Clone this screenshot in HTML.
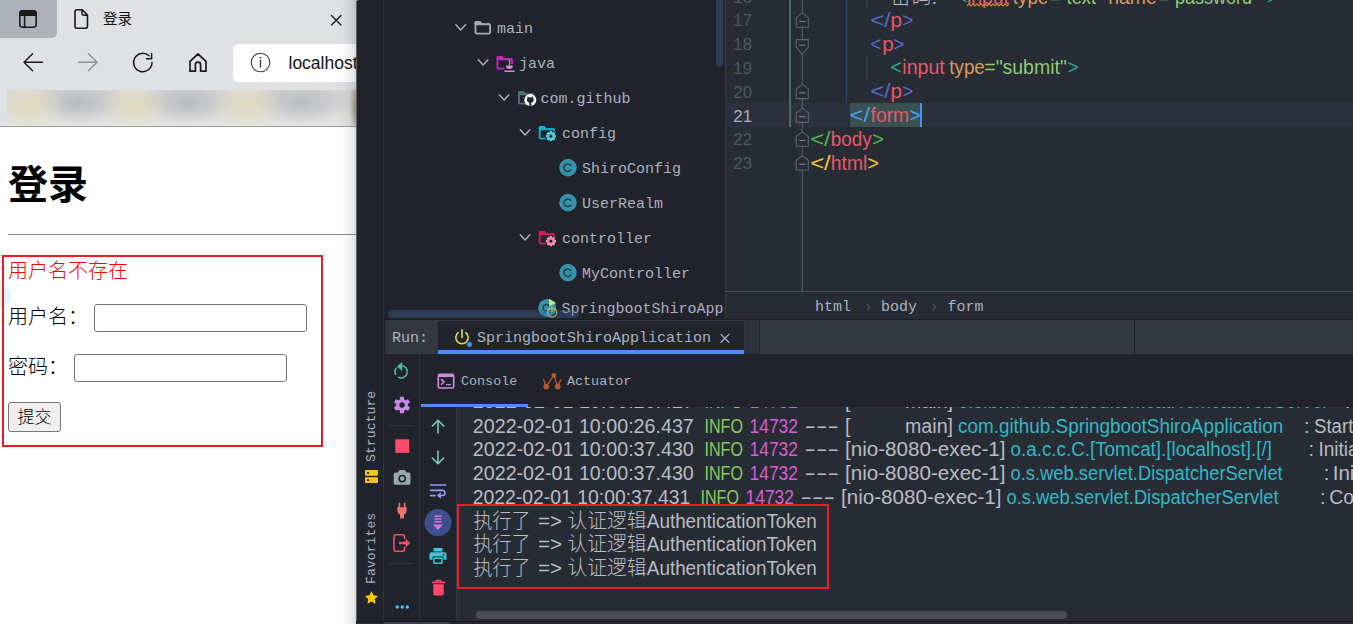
<!DOCTYPE html>
<html lang="zh-CN"><head><meta charset="utf-8"><title>登录</title>
<style>

html,body{margin:0;padding:0;}
body{width:1353px;height:624px;overflow:hidden;position:relative;background:#21242c;font-family:'Liberation Sans', 'Noto Sans CJK SC', sans-serif;}
.abs{position:absolute;}
#browser{position:absolute;left:0;top:0;width:366px;height:624px;background:#fff;overflow:hidden;}
#ide{position:absolute;left:356px;top:0;width:997px;height:624px;background:#21242c;overflow:hidden;border-top-left-radius:3px;}
svg{position:absolute;left:0;top:0;overflow:visible;}
.mono{font-family:'Liberation Mono', 'Noto Sans CJK SC', monospace;}
.tree{position:absolute;font-family:'Liberation Mono', 'Noto Sans CJK SC', monospace;font-size:15px;line-height:20px;color:#abb2bf;white-space:pre;}
.vtxt{position:absolute;font-family:'Liberation Mono', 'Noto Sans CJK SC', monospace;font-size:13.200px;line-height:16px;color:#abb2bf;white-space:pre;transform:rotate(-90deg);transform-origin:0 0;}
.pg{position:absolute;font-family:'Liberation Sans', 'Noto Sans CJK SC', sans-serif;font-weight:300;font-size:20px;line-height:24px;color:#000;white-space:pre;}
.inp{position:absolute;box-sizing:border-box;margin:0;padding:0;border:1px solid #767676;border-radius:3px;background:#fff;outline:none;-webkit-appearance:none;appearance:none;}

</style></head><body>
<div id="browser">
<div class="abs" style="left:0;top:0;width:366px;height:127px;background:#dfe1e5;"></div>
<div class="abs" style="left:0;top:0;width:57px;height:38px;background:#adb1b9;border-bottom-right-radius:5px;"></div>
<div class="abs" style="left:7px;top:90px;width:350px;height:37px;overflow:hidden;background:radial-gradient(ellipse 34px 26px at 22px 16px,rgba(229,221,188,.85),rgba(229,221,188,0)),radial-gradient(ellipse 34px 26px at 128px 16px,rgba(229,221,188,.85),rgba(229,221,188,0)),radial-gradient(ellipse 36px 26px at 240px 16px,rgba(229,221,188,.8),rgba(229,221,188,0)),radial-gradient(ellipse 50px 22px at 72px 12px,rgba(178,180,187,.85),rgba(178,180,187,0)),radial-gradient(ellipse 50px 22px at 180px 12px,rgba(178,180,187,.85),rgba(178,180,187,0)),radial-gradient(ellipse 52px 22px at 294px 12px,rgba(178,180,187,.8),rgba(178,180,187,0)),radial-gradient(ellipse 9px 28px at 351px 16px,rgba(150,132,92,.85),rgba(150,132,92,0)),linear-gradient(180deg,#d6d6d5 0,#dbdbda 55%,#e5e5e4 100%);"></div>
<div class="abs" style="left:0;top:126px;width:357px;height:1px;background:#9b9b9b;"></div>
<div class="abs" style="left:233px;top:44px;width:140px;height:38px;background:#fff;border-radius:6px;"></div>
<div class="abs" style="left:288.5px;top:50.700px;font-family:'Liberation Sans', 'Noto Sans CJK SC', sans-serif;font-size:17.5px;line-height:24px;color:#111;white-space:pre;">localhost:8080</div>
<div class="abs" style="left:103px;top:8.700px;font-family:'Liberation Sans', 'Noto Sans CJK SC', sans-serif;font-size:14.5px;line-height:20px;color:#111;white-space:pre;">登录</div>
<svg width="357" height="127" viewBox="0 0 357 127" fill="none" stroke="#1b1b1b" stroke-width="1.6" stroke-linecap="round" stroke-linejoin="round">
<rect x="19.8" y="10.8" width="16.4" height="16.4" rx="3"/>
<path d="M20 15.2H36V13.5a2.7 2.7 0 0 0-2.7-2.7H22.7A2.7 2.7 0 0 0 20 13.5Z" fill="#1b1b1b"/>
<path d="M24.6 15.5V27"/>
<path d="M77 9.8h5.2l5.3 5.3V26.3a2 2 0 0 1-2 2H77a2 2 0 0 1-2-2V11.8a2 2 0 0 1 2-2Z M82 10v3.6a1.6 1.6 0 0 0 1.6 1.6h3.7"/>
<path d="M331.5 15.5l9.5 9.5M341 15.5l-9.5 9.5" stroke-width="1.4"/>
<path d="M24 62.2H42.5M32.6 53.8L24 62.2l8.6 8.5" stroke-width="1.5"/>
<path d="M78.5 62.2H97M88.4 53.8L97 62.2l-8.6 8.5" stroke="#8d8f93" stroke-width="1.5"/>
<path d="M152 62.5a9.2 9.2 0 1 1-3-6.8 M151.6 53.6v5.2h-5.2" stroke-width="1.5"/>
<path d="M190 71.2V61.3l8-7.3 8 7.3v9.9h-5.4v-6.4a2.6 2.6 0 0 0-5.2 0v6.4Z" stroke-width="1.7"/>
<circle cx="260.5" cy="62.5" r="9.3" stroke="#444" stroke-width="1.1"/>
<path d="M260.5 60.3v6.7" stroke="#333" stroke-width="1.3"/><circle cx="260.5" cy="57.6" r="0.9" fill="#333" stroke="none"/>
</svg>
<h1 class="abs" style="margin:0;left:8px;top:158px;font-family:'Liberation Sans', 'Noto Sans CJK SC', sans-serif;font-weight:bold;font-size:40px;line-height:54px;color:#000;white-space:pre;">登录</h1>
<hr class="abs" style="margin:0;border:0;left:8px;top:234px;width:349px;height:1px;background:#8a8a8a;">
<div class="abs" style="left:-18px;top:281px;width:28px;height:30px;border-radius:50%;background:#dffaf0;"></div>
<div class="abs" style="left:2px;top:255px;width:321px;height:192px;box-sizing:border-box;border:2px solid #e81e25;"></div>
<form style="margin:0;">
<span class="pg" style="left:8px;top:259px;color:#ff0000;">用户名不存在</span>
<label class="pg" style="left:8px;top:305px;">用户名：</label>
<input class="inp" type="text" name="username" tabindex="-1" style="left:94px;top:304px;width:213px;height:28px;">
<label class="pg" style="left:8px;top:355px;">密码：</label>
<input class="inp" type="text" name="password" tabindex="-1" style="left:74px;top:354px;width:213px;height:28px;">
<button type="button" tabindex="-1" class="abs" style="margin:0;padding:1px 0 0 0;left:8px;top:402px;width:53px;height:30px;box-sizing:border-box;border:1px solid #767676;border-radius:3px;background:#efefef;font-family:'Liberation Sans', 'Noto Sans CJK SC', sans-serif;font-size:17px;font-weight:300;line-height:28px;text-align:center;color:#000;">提交</button>
</form>
<div class="abs" style="left:336px;top:0;width:30px;height:624px;background:linear-gradient(90deg,rgba(0,0,0,0),rgba(0,0,0,.025) 9px,rgba(0,0,0,.07) 15px,rgba(0,0,0,.15) 20px,rgba(0,0,0,.15) 30px);"></div>
</div>
<div id="ide">
<div class="abs" style="left:0;top:0;width:1px;height:624px;background:#5d5e64;"></div>
<div class="abs" style="left:27px;top:0;width:1px;height:624px;background:#2e323d;"></div>
<div class="tree" style="left:141px;top:19.5px;">main</div>
<div class="tree" style="left:163px;top:54.5px;">java</div>
<div class="tree" style="left:184.5px;top:89.5px;">com.github</div>
<div class="tree" style="left:206px;top:124.5px;">config</div>
<div class="tree" style="left:226px;top:159.5px;">ShiroConfig</div>
<div class="tree" style="left:226px;top:194.5px;">UserRealm</div>
<div class="tree" style="left:206px;top:229.5px;">controller</div>
<div class="tree" style="left:226px;top:264.5px;">MyController</div>
<div class="tree" style="left:205.5px;top:299.5px;">SpringbootShiroApp</div>
<svg width="997" height="624" viewBox="356 0 997 624" fill="none">
<path d="M455.90000000000003 24.8l4.800 5.200 4.800-5.200" stroke="#abb2bf" stroke-width="1.400" stroke-linecap="round" stroke-linejoin="round"/>
<path d="M475.5 24.2h13.400a1.2 1.2 0 0 1 1.2 1.2v7a1.2 1.2 0 0 1-1.2 1.2H476.7a1.2 1.2 0 0 1-1.2-1.2Z" stroke="#a3abb9" stroke-width="1.9"/>
<path d="M474.5 24.4V22.4a1.3 1.3 0 0 1 1.3-1.3h4.600l2 2.4h7.700v1Z" fill="#a3abb9"/>
<path d="M478.3 59.8l4.800 5.200 4.800-5.200" stroke="#abb2bf" stroke-width="1.400" stroke-linecap="round" stroke-linejoin="round"/>
<path d="M497.5 59.2h13.400a1.2 1.2 0 0 1 1.2 1.2v7a1.2 1.2 0 0 1-1.2 1.2H498.7a1.2 1.2 0 0 1-1.2-1.2Z" stroke="#c026c0" stroke-width="1.9"/>
<path d="M496.5 59.4V57.4a1.3 1.3 0 0 1 1.3-1.3h4.600l2 2.4h7.700v1Z" fill="#c026c0"/>
<rect x="504.3" y="64" width="10.400" height="9" fill="#21242c"/>
<path d="M509.9 60.2c-2.200 1.500 1.600 2.300-.6 4.300" stroke="#d58be0" stroke-width="1.100" stroke-linecap="round"/>
<path d="M505.9 65.6h7c0 2.400-1.300 3.500-3.500 3.500s-3.500-1.100-3.500-3.500Z" fill="#d58be0"/>
<path d="M504.9 71.2h9.200" stroke="#d58be0" stroke-width="1.400" stroke-linecap="round"/>
<path d="M499.3 94.8l4.800 5.200 4.800-5.200" stroke="#abb2bf" stroke-width="1.400" stroke-linecap="round" stroke-linejoin="round"/>
<path d="M519 94.2h13.400a1.2 1.2 0 0 1 1.2 1.2v7a1.2 1.2 0 0 1-1.2 1.2H520.2a1.2 1.2 0 0 1-1.2-1.2Z" stroke="#546e7a" stroke-width="1.9"/>
<path d="M518 94.4V92.4a1.3 1.3 0 0 1 1.3-1.3h4.600l2 2.4h7.700v1Z" fill="#546e7a"/>
<circle cx="530.3" cy="100" r="6" fill="#fff"/>
<path d="M527.6 96.2l1.5 1.2a4 4 0 0 1 2.4 0l1.5-1.2.3 2.1a3 3 0 0 1 .3 2.4c-.5 1.6-1.8 2-2.6 2.1.4.4.4 1 .4 1.6v1.4h-2.2v-1.4c0-.6 0-1.2.4-1.6-.8-.1-2.100-.5-2.6-2.1a3 3 0 0 1 .3-2.400Z" fill="#21242c"/>
<path d="M520.3 129.8l4.800 5.200 4.800-5.200" stroke="#abb2bf" stroke-width="1.400" stroke-linecap="round" stroke-linejoin="round"/>
<path d="M539.7 129.2h13.400a1.2 1.2 0 0 1 1.2 1.2v7a1.2 1.2 0 0 1-1.2 1.2H540.9000000000001a1.2 1.2 0 0 1-1.2-1.2Z" stroke="#10b4cc" stroke-width="1.9"/>
<path d="M538.7 129.4V127.4a1.3 1.3 0 0 1 1.3-1.3h4.600l2 2.4h7.700v1Z" fill="#10b4cc"/>
<circle cx="550.9000000000001" cy="136.2" r="6" fill="#21242c"/>
<g transform="translate(550.9000000000001 136.2) scale(.88)" fill="#4dd0e1"><rect x="-1.5" y="-5.8" width="3" height="11.6" rx=".6" transform="rotate(0)"/><rect x="-1.5" y="-5.8" width="3" height="11.6" rx=".6" transform="rotate(45)"/><rect x="-1.5" y="-5.8" width="3" height="11.6" rx=".6" transform="rotate(90)"/><rect x="-1.5" y="-5.8" width="3" height="11.6" rx=".6" transform="rotate(135)"/><circle r="4.2"/><circle r="1.8" fill="#21242c"/></g>
<circle cx="568.0" cy="167.6" r="8.8" fill="#3592a8"/>
<path d="M570.8 165.4a3.8 3.8 0 1 0 0 4.600" stroke="#22404f" stroke-width="1.5" stroke-linecap="round"/>
<circle cx="568.0" cy="202.6" r="8.8" fill="#3592a8"/>
<path d="M570.8 200.4a3.8 3.8 0 1 0 0 4.600" stroke="#22404f" stroke-width="1.5" stroke-linecap="round"/>
<path d="M520.3 234.8l4.800 5.200 4.800-5.200" stroke="#abb2bf" stroke-width="1.400" stroke-linecap="round" stroke-linejoin="round"/>
<path d="M539.7 234.2h13.400a1.2 1.2 0 0 1 1.2 1.2v7a1.2 1.2 0 0 1-1.2 1.2H540.9000000000001a1.2 1.2 0 0 1-1.2-1.2Z" stroke="#d81b60" stroke-width="1.9"/>
<path d="M538.7 234.4V232.4a1.3 1.3 0 0 1 1.3-1.3h4.600l2 2.4h7.700v1Z" fill="#d81b60"/>
<circle cx="550.9000000000001" cy="241.2" r="6" fill="#21242c"/>
<g transform="translate(550.9000000000001 241.2) scale(.88)" fill="#f48fb1"><rect x="-1.5" y="-5.8" width="3" height="11.6" rx=".6" transform="rotate(0)"/><rect x="-1.5" y="-5.8" width="3" height="11.6" rx=".6" transform="rotate(45)"/><rect x="-1.5" y="-5.8" width="3" height="11.6" rx=".6" transform="rotate(90)"/><rect x="-1.5" y="-5.8" width="3" height="11.6" rx=".6" transform="rotate(135)"/><circle r="4.2"/><circle r="1.8" fill="#21242c"/></g>
<circle cx="568.0" cy="272.6" r="8.8" fill="#3592a8"/>
<path d="M570.8 270.4a3.8 3.8 0 1 0 0 4.600" stroke="#22404f" stroke-width="1.5" stroke-linecap="round"/>
<circle cx="547.2" cy="307.9" r="9" fill="#3592a8"/>
<path d="M548.8000000000001 305.6a3.300 3.300 0 1 0 0 4.400" stroke="#22404f" stroke-width="1.500" stroke-linecap="round"/>
<path d="M549.0 298.8l7.200 4.300-7 3.500Z" fill="#bfe87a"/>
<path d="M549.5 308.7a4.600 4.600 0 1 0 5 0M552.0 306.8v5.400" stroke="#d6dc4a" stroke-width="1.300" stroke-linecap="round"/>
</svg>
<div class="abs" style="left:359.5px;top:-8px;width:7px;height:75px;border-radius:4px;background:rgba(67,96,156,.36);"></div>
<div class="abs" style="left:31.5px;top:310px;width:191px;height:7.800px;border-radius:4px;background:rgba(67,96,156,.36);"></div>
<div class="abs" style="left:369px;top:0;width:628px;height:319px;background:#282c35;overflow:hidden;">
</div>
<div class="abs" style="left:369px;top:0;width:1px;height:319px;background:#343945;"></div>
<div class="abs" style="left:369px;top:103.200px;width:628px;height:23.800px;background:#2c313d;"></div>
<div class="abs" style="left:494px;top:103.200px;width:70.300px;height:23.800px;background:#3b5151;"></div>
<div class="abs" style="left:564px;top:103.200px;width:2px;height:23.800px;background:#4d8dff;"></div>
<div class="abs" style="left:369px;top:291px;width:628px;height:1px;background:#4a4f5c;"></div>
<svg width="997" height="624" viewBox="356 0 997 624" fill="none">
<rect x="789.300" y="0" width="1.6" height="126.800" fill="#557c6d"/>
<rect x="801.800" y="0" width="1" height="291" fill="#5b606c"/>
<rect x="846.200" y="0" width="1" height="103" fill="#2c476a"/>
<rect x="866.400" y="0" width="1" height="8" fill="#3b4150"/>
<rect x="866.400" y="55.599999999999994" width="1" height="23.8" fill="#3b4150"/>
<path d="M796.300 27.2V17.5L802.300 12.899999999999999l6 4.600V27.2Z" fill="#282c35" stroke="#5d6370" stroke-width="1.1"/>
<path d="M799.200 21.5h6.200" stroke="#7a808c" stroke-width="1.1"/>
<path d="M796.300 39.6H808.300V47.0L802.300 54.6l-6-7.600Z" fill="#282c35" stroke="#5d6370" stroke-width="1.1"/>
<path d="M799.200 45.2h6.200" stroke="#7a808c" stroke-width="1.1"/>
<path d="M796.300 98.6V88.89999999999999L802.300 84.3l6 4.600V98.6Z" fill="#282c35" stroke="#5d6370" stroke-width="1.1"/>
<path d="M799.200 92.89999999999999h6.200" stroke="#7a808c" stroke-width="1.1"/>
<path d="M796.300 122.4V112.7L802.300 108.10000000000001l6 4.600V122.4Z" fill="#2c313d" stroke="#5d6370" stroke-width="1.1"/>
<path d="M799.200 116.7h6.200" stroke="#7a808c" stroke-width="1.1"/>
<path d="M796.300 146.2V136.49999999999997L802.300 131.89999999999998l6 4.600V146.2Z" fill="#282c35" stroke="#5d6370" stroke-width="1.1"/>
<path d="M799.200 140.49999999999997h6.200" stroke="#7a808c" stroke-width="1.1"/>
<path d="M796.300 170.0V160.29999999999998L802.300 155.7l6 4.600V170.0Z" fill="#282c35" stroke="#5d6370" stroke-width="1.1"/>
<path d="M799.200 164.29999999999998h6.200" stroke="#7a808c" stroke-width="1.1"/>
</svg>
<svg width="997" height="319" viewBox="356 0 997 319" style="font-family:'Liberation Sans', 'Noto Sans CJK SC', sans-serif;overflow:hidden;">
<text x="752" y="3.3" fill="#4f5668" font-size="16.8" text-anchor="end">16</text>
<text x="752" y="26.4" fill="#4f5668" font-size="16.8" text-anchor="end">17</text>
<text x="752" y="50.2" fill="#4f5668" font-size="16.8" text-anchor="end">18</text>
<text x="752" y="74.0" fill="#4f5668" font-size="16.8" text-anchor="end">19</text>
<text x="752" y="97.8" fill="#4f5668" font-size="16.8" text-anchor="end">20</text>
<text x="752" y="121.6" fill="#a9b0bd" font-size="16.8" text-anchor="end">21</text>
<text x="752" y="145.4" fill="#4f5668" font-size="16.8" text-anchor="end">22</text>
<text x="752" y="169.2" fill="#4f5668" font-size="16.8" text-anchor="end">23</text>
<text x="890.3" y="3.6" fill="#b8bcc6" font-size="20" textLength="47" lengthAdjust="spacingAndGlyphs" font-weight="300">密码:</text>
<text x="958.8" y="3.6" fill="#26a69a" font-size="20" textLength="8.5" lengthAdjust="spacingAndGlyphs">&lt;</text>
<text x="967" y="3.6" fill="#e5596a" font-size="20" textLength="42" lengthAdjust="spacingAndGlyphs">input</text>
<text x="1012.8" y="3.6" fill="#d9995f" font-size="20" textLength="35.5" lengthAdjust="spacingAndGlyphs">type</text>
<text x="1049.5" y="3.6" fill="#8fca72" font-size="20" textLength="53" lengthAdjust="spacingAndGlyphs">=&quot;text&quot;</text>
<text x="1108.3" y="3.6" fill="#d9995f" font-size="20" textLength="48.5" lengthAdjust="spacingAndGlyphs">name</text>
<text x="1158" y="3.6" fill="#8fca72" font-size="20" textLength="100.5" lengthAdjust="spacingAndGlyphs">=&quot;password&quot;</text>
<text x="1267.2" y="3.6" fill="#26a69a" font-size="20" textLength="9.5" lengthAdjust="spacingAndGlyphs">&gt;</text>
<path d="M967 5.9l2 -2l2 2l2 -2l2 2l2 -2l2 2l2 -2l2 2l2 -2l2 2l2 -2l2 2l2 -2l2 2l2 -2l2 2l2 -2l2 2l2 -2l2 2l2 -2" stroke="#d08a35" stroke-width="1.100" fill="none"/>
<text x="870.2" y="26.7" fill="#5867c9" font-size="20" textLength="20.5" lengthAdjust="spacingAndGlyphs">&lt;/</text>
<text x="890.5" y="26.7" fill="#e5596a" font-size="20" textLength="11.5" lengthAdjust="spacingAndGlyphs">p</text>
<text x="902.3" y="26.7" fill="#5867c9" font-size="20" textLength="11.2" lengthAdjust="spacingAndGlyphs">&gt;</text>
<text x="870.2" y="98.1" fill="#5867c9" font-size="20" textLength="20.5" lengthAdjust="spacingAndGlyphs">&lt;/</text>
<text x="890.5" y="98.1" fill="#e5596a" font-size="20" textLength="11.5" lengthAdjust="spacingAndGlyphs">p</text>
<text x="902.3" y="98.1" fill="#5867c9" font-size="20" textLength="11.2" lengthAdjust="spacingAndGlyphs">&gt;</text>
<text x="870.2" y="50.5" fill="#5867c9" font-size="20" textLength="11.2" lengthAdjust="spacingAndGlyphs">&lt;</text>
<text x="882.2" y="50.5" fill="#e5596a" font-size="20" textLength="11.5" lengthAdjust="spacingAndGlyphs">p</text>
<text x="893.3" y="50.5" fill="#5867c9" font-size="20" textLength="11.2" lengthAdjust="spacingAndGlyphs">&gt;</text>
<text x="890.5" y="74.3" fill="#26a69a" font-size="20" textLength="11.2" lengthAdjust="spacingAndGlyphs">&lt;</text>
<text x="902.3" y="74.3" fill="#e5596a" font-size="20" textLength="42.5" lengthAdjust="spacingAndGlyphs">input</text>
<text x="949.3" y="74.3" fill="#d9995f" font-size="20" textLength="35.5" lengthAdjust="spacingAndGlyphs">type</text>
<text x="984.3" y="74.3" fill="#8fca72" font-size="20" textLength="82.5" lengthAdjust="spacingAndGlyphs">=&quot;submit&quot;</text>
<text x="1067.5" y="74.3" fill="#26a69a" font-size="20" textLength="11.2" lengthAdjust="spacingAndGlyphs">&gt;</text>
<text x="849.6" y="121.9" fill="#3fa2f2" font-size="20" textLength="20.5" lengthAdjust="spacingAndGlyphs">&lt;/</text>
<text x="870.6" y="121.9" fill="#e5596a" font-size="20" textLength="38.5" lengthAdjust="spacingAndGlyphs">form</text>
<text x="909.2" y="121.9" fill="#3fa2f2" font-size="20" textLength="11.5" lengthAdjust="spacingAndGlyphs">&gt;</text>
<text x="810.2" y="145.7" fill="#4fb551" font-size="20" textLength="20.5" lengthAdjust="spacingAndGlyphs">&lt;/</text>
<text x="830.8" y="145.7" fill="#e5596a" font-size="20" textLength="41" lengthAdjust="spacingAndGlyphs">body</text>
<text x="872.2" y="145.7" fill="#4fb551" font-size="20" textLength="11.5" lengthAdjust="spacingAndGlyphs">&gt;</text>
<text x="810.2" y="169.5" fill="#f7c331" font-size="20" textLength="20.5" lengthAdjust="spacingAndGlyphs">&lt;/</text>
<text x="830.8" y="169.5" fill="#e5596a" font-size="20" textLength="36.5" lengthAdjust="spacingAndGlyphs">html</text>
<text x="867.5" y="169.5" fill="#f7c331" font-size="20" textLength="11.5" lengthAdjust="spacingAndGlyphs">&gt;</text>
</svg>
<div class="tree" style="left:459px;top:297.5px;color:#abb2bf;">html</div>
<div class="tree" style="left:525px;top:297.5px;color:#abb2bf;">body</div>
<div class="tree" style="left:591.5px;top:297.5px;color:#abb2bf;">form</div>
<div class="tree" style="left:508px;top:296.5px;color:#565c6b;font-size:14px;">›</div>
<div class="tree" style="left:574px;top:296.5px;color:#565c6b;font-size:14px;">›</div>
<div class="abs" style="left:29px;top:319.700px;width:968px;height:34.300px;background:#333843;"></div>
<div class="abs" style="left:28px;top:318.700px;width:969px;height:1px;background:#1b1d23;"></div>
<div class="abs" style="left:81.5px;top:321px;width:306.5px;height:33px;background:#21242c;"></div>
<div class="abs" style="left:81.5px;top:350.200px;width:306.5px;height:3.800px;background:#4d8dff;"></div>
<div class="abs" style="left:388.5px;top:320px;width:15px;height:34px;background:#2d323d;"></div>
<div class="abs" style="left:403px;top:320px;width:1px;height:34px;background:#23262e;"></div>
<div class="abs" style="left:778px;top:320px;width:1px;height:34px;background:#23262e;"></div>
<div class="tree" style="left:36px;top:328.5px;">Run:</div>
<div class="tree" style="left:121px;top:328.5px;">SpringbootShiroApplication</div>
<div class="abs" style="left:101px;top:407px;width:896px;height:214px;background:#282c35;"></div>
<div class="abs" style="left:63px;top:354px;width:1px;height:267px;background:#2e323d;"></div>
<div class="abs" style="left:100px;top:407px;width:1px;height:214px;background:#333845;"></div>
<div class="abs" style="left:64.5px;top:403.600px;width:107.5px;height:3.4px;background:#4d8dff;"></div>
<div class="tree" style="left:105px;top:371.800px;font-size:13.400px;">Console</div>
<div class="tree" style="left:211px;top:371.800px;font-size:13.400px;">Actuator</div>
<div class="vtxt" style="left:7.5px;top:462.300px;">Structure</div>
<div class="vtxt" style="left:7.5px;top:584.300px;">Favorites</div>
<div class="abs" style="left:0;top:621px;width:997px;height:1px;background:#17191e;"></div>
<div class="abs" style="left:0;top:622px;width:997px;height:2px;background:#262a33;"></div>
<div class="abs" style="left:28px;top:622px;width:66px;height:2px;background:#3a3f4b;"></div>
<div class="abs" style="left:120px;top:611px;width:591px;height:7.5px;border-radius:4px;background:#484c56;"></div>
<svg width="997" height="624" viewBox="356 0 997 624" style="font-family:'Liberation Sans', 'Noto Sans CJK SC', sans-serif;">
<defs><clipPath id="cc"><rect x="457" y="407" width="896" height="214"/></clipPath></defs>
<g clip-path="url(#cc)">
<text x="472.8" y="408.3" fill="#b9bcc4" font-size="20" textLength="221" lengthAdjust="spacingAndGlyphs">2022-02-01 10:00:26.427</text>
<text x="704.5" y="408.3" fill="#8bc85f" font-size="20" textLength="38.5" lengthAdjust="spacingAndGlyphs">INFO</text>
<text x="749.5" y="408.3" fill="#d65fd3" font-size="20" textLength="48.5" lengthAdjust="spacingAndGlyphs">14732</text>
<text x="804.5" y="408.3" fill="#b9bcc4" font-size="20" textLength="34.5" lengthAdjust="spacingAndGlyphs">---</text>
<text x="845" y="408.3" fill="#b9bcc4" font-size="20" textLength="5.5" lengthAdjust="spacingAndGlyphs">[</text>
<text x="905" y="408.3" fill="#b9bcc4" font-size="20" textLength="48" lengthAdjust="spacingAndGlyphs">main]</text>
<text x="958" y="408.3" fill="#2fb8c6" font-size="20" textLength="370.5" lengthAdjust="spacingAndGlyphs">o.s.b.w.embedded.tomcat.TomcatWebServer</text>
<text x="1344.8" y="408.3" fill="#b9bcc4" font-size="20">:</text>
<text x="1356" y="408.3" fill="#b9bcc4" font-size="20" textLength="130" lengthAdjust="spacingAndGlyphs">Tomcat started</text>
<text x="472.8" y="432.7" fill="#b9bcc4" font-size="20" textLength="221" lengthAdjust="spacingAndGlyphs">2022-02-01 10:00:26.437</text>
<text x="704.5" y="432.7" fill="#8bc85f" font-size="20" textLength="38.5" lengthAdjust="spacingAndGlyphs">INFO</text>
<text x="749.5" y="432.7" fill="#d65fd3" font-size="20" textLength="48.5" lengthAdjust="spacingAndGlyphs">14732</text>
<text x="804.5" y="432.7" fill="#b9bcc4" font-size="20" textLength="34.5" lengthAdjust="spacingAndGlyphs">---</text>
<text x="845" y="432.7" fill="#b9bcc4" font-size="20" textLength="5.5" lengthAdjust="spacingAndGlyphs">[</text>
<text x="905" y="432.7" fill="#b9bcc4" font-size="20" textLength="48" lengthAdjust="spacingAndGlyphs">main]</text>
<text x="958" y="432.7" fill="#2fb8c6" font-size="20" textLength="325.2" lengthAdjust="spacingAndGlyphs">com.github.SpringbootShiroApplication</text>
<text x="1304.1" y="432.7" fill="#b9bcc4" font-size="20">:</text>
<text x="1314" y="432.7" fill="#b9bcc4" font-size="20" textLength="290" lengthAdjust="spacingAndGlyphs">Started SpringbootShiroApplication</text>
<text x="472.8" y="456.4" fill="#b9bcc4" font-size="20" textLength="221" lengthAdjust="spacingAndGlyphs">2022-02-01 10:00:37.430</text>
<text x="704.5" y="456.4" fill="#8bc85f" font-size="20" textLength="38.5" lengthAdjust="spacingAndGlyphs">INFO</text>
<text x="749.5" y="456.4" fill="#d65fd3" font-size="20" textLength="48.5" lengthAdjust="spacingAndGlyphs">14732</text>
<text x="804.5" y="456.4" fill="#b9bcc4" font-size="20" textLength="34.5" lengthAdjust="spacingAndGlyphs">---</text>
<text x="845" y="456.4" fill="#b9bcc4" font-size="20" textLength="160.5" lengthAdjust="spacingAndGlyphs">[nio-8080-exec-1]</text>
<text x="1010.5" y="456.4" fill="#2fb8c6" font-size="20" textLength="261.4" lengthAdjust="spacingAndGlyphs">o.a.c.c.C.[Tomcat].[localhost].[/]</text>
<text x="1308.6" y="456.4" fill="#b9bcc4" font-size="20">:</text>
<text x="1318.4" y="456.4" fill="#b9bcc4" font-size="20" textLength="300" lengthAdjust="spacingAndGlyphs">Initializing Spring DispatcherServlet</text>
<text x="472.8" y="480.1" fill="#b9bcc4" font-size="20" textLength="221" lengthAdjust="spacingAndGlyphs">2022-02-01 10:00:37.430</text>
<text x="704.5" y="480.1" fill="#8bc85f" font-size="20" textLength="38.5" lengthAdjust="spacingAndGlyphs">INFO</text>
<text x="749.5" y="480.1" fill="#d65fd3" font-size="20" textLength="48.5" lengthAdjust="spacingAndGlyphs">14732</text>
<text x="804.5" y="480.1" fill="#b9bcc4" font-size="20" textLength="34.5" lengthAdjust="spacingAndGlyphs">---</text>
<text x="845" y="480.1" fill="#b9bcc4" font-size="20" textLength="160.5" lengthAdjust="spacingAndGlyphs">[nio-8080-exec-1]</text>
<text x="1010.5" y="480.1" fill="#2fb8c6" font-size="20" textLength="272.2" lengthAdjust="spacingAndGlyphs">o.s.web.servlet.DispatcherServlet</text>
<text x="1323.7" y="480.1" fill="#b9bcc4" font-size="20">:</text>
<text x="1332.7" y="480.1" fill="#b9bcc4" font-size="20" textLength="160" lengthAdjust="spacingAndGlyphs">Initializing Servlet</text>
<text x="472.8" y="503.8" fill="#b9bcc4" font-size="20" textLength="217.5" lengthAdjust="spacingAndGlyphs">2022-02-01 10:00:37.431</text>
<text x="700.5" y="503.8" fill="#8bc85f" font-size="20" textLength="38.5" lengthAdjust="spacingAndGlyphs">INFO</text>
<text x="745.5" y="503.8" fill="#d65fd3" font-size="20" textLength="48.5" lengthAdjust="spacingAndGlyphs">14732</text>
<text x="800.5" y="503.8" fill="#b9bcc4" font-size="20" textLength="34.5" lengthAdjust="spacingAndGlyphs">---</text>
<text x="841" y="503.8" fill="#b9bcc4" font-size="20" textLength="160.5" lengthAdjust="spacingAndGlyphs">[nio-8080-exec-1]</text>
<text x="1006.5" y="503.8" fill="#2fb8c6" font-size="20" textLength="272.1" lengthAdjust="spacingAndGlyphs">o.s.web.servlet.DispatcherServlet</text>
<text x="1319.9" y="503.8" fill="#b9bcc4" font-size="20">:</text>
<text x="1329.2" y="503.8" fill="#b9bcc4" font-size="20" textLength="200" lengthAdjust="spacingAndGlyphs">Completed initialization</text>
<text x="473.5" y="527.5" fill="#b9bcc4" font-size="20" textLength="57" lengthAdjust="spacingAndGlyphs" font-weight="300">执行了</text>
<text x="538" y="527.5" fill="#b9bcc4" font-size="20" textLength="24" lengthAdjust="spacingAndGlyphs">=&gt;</text>
<text x="567.5" y="527.5" fill="#b9bcc4" font-size="20" textLength="79" lengthAdjust="spacingAndGlyphs" font-weight="300">认证逻辑</text>
<text x="646.8" y="527.5" fill="#b9bcc4" font-size="20" textLength="170" lengthAdjust="spacingAndGlyphs">AuthenticationToken</text>
<text x="473.5" y="551.2" fill="#b9bcc4" font-size="20" textLength="57" lengthAdjust="spacingAndGlyphs" font-weight="300">执行了</text>
<text x="538" y="551.2" fill="#b9bcc4" font-size="20" textLength="24" lengthAdjust="spacingAndGlyphs">=&gt;</text>
<text x="567.5" y="551.2" fill="#b9bcc4" font-size="20" textLength="79" lengthAdjust="spacingAndGlyphs" font-weight="300">认证逻辑</text>
<text x="646.8" y="551.2" fill="#b9bcc4" font-size="20" textLength="170" lengthAdjust="spacingAndGlyphs">AuthenticationToken</text>
<text x="473.5" y="574.9" fill="#b9bcc4" font-size="20" textLength="57" lengthAdjust="spacingAndGlyphs" font-weight="300">执行了</text>
<text x="538" y="574.9" fill="#b9bcc4" font-size="20" textLength="24" lengthAdjust="spacingAndGlyphs">=&gt;</text>
<text x="567.5" y="574.9" fill="#b9bcc4" font-size="20" textLength="79" lengthAdjust="spacingAndGlyphs" font-weight="300">认证逻辑</text>
<text x="646.8" y="574.9" fill="#b9bcc4" font-size="20" textLength="170" lengthAdjust="spacingAndGlyphs">AuthenticationToken</text>
</g>
</svg>
<div class="abs" style="left:100.5px;top:503.800px;width:372.5px;height:85.2px;box-sizing:border-box;border:2px solid #ee1c25;"></div>
<svg width="997" height="624" viewBox="356 0 997 624" fill="none" stroke-linecap="round" stroke-linejoin="round">
<path d="M458.200 332.700a6.200 6.200 0 1 0 7.600 0M462 329.800v7.600" stroke="#d6dc4a" stroke-width="1.600"/>
<circle cx="469.600" cy="344.500" r="2.900" fill="#4d8dff" stroke="#21242c" stroke-width=".8"/>
<path d="M721 334.400l7.800 7.800M728.800 334.400l-7.800 7.800" stroke="#abb2bf" stroke-width="1.3"/>
<rect x="438.300" y="374.400" width="15.4" height="13.6" rx="1.5" stroke="#cf8be0" stroke-width="1.6"/>
<rect x="438.300" y="374.400" width="15.400" height="2.600" fill="#cf8be0"/>
<path d="M441.400 379.600l2.800 2.300-2.800 2.300M446.600 384.600h3.800" stroke="#cf8be0" stroke-width="1.400"/>
<path d="M543.600 379.500l2.700 7 7.600-11.400 3.800 11.400 3-6.400" stroke="#b9582b" stroke-width="1.300"/>
<circle cx="553.900" cy="375.200" r="2.300" fill="#b9582b"/><circle cx="546.300" cy="386.600" r="2.900" fill="#b9582b"/><circle cx="557.700" cy="386.600" r="2.900" fill="#b9582b"/>
<path d="M401.200 365.500A6.200 6.200 0 1 1 398.100 377.100M395.800 374.800A6.200 6.200 0 0 1 396.400 367.800" stroke="#4fb8a8" stroke-width="1.600" stroke-linecap="butt"/>
<path d="M397.200 366.500l4.800-3.900v7.600Z" fill="#4fb8a8" stroke="#4fb8a8" stroke-width=".6"/>
<g transform="translate(402 405)" fill="#c28be6"><rect x="-2.100" y="-8.200" width="4.200" height="16.400" rx=".8" transform="rotate(0)"/><rect x="-2.100" y="-8.200" width="4.200" height="16.400" rx=".8" transform="rotate(60)"/><rect x="-2.100" y="-8.200" width="4.200" height="16.400" rx=".8" transform="rotate(120)"/><circle r="5.900"/><circle r="2.700" fill="#21242c"/></g>
<path d="M390 425.700h24M390 563.300h24" stroke="#343945" stroke-width="1"/>
<rect x="395.300" y="439.300" width="13.900" height="13.600" fill="#fb4d6b"/>
<path d="M395.200 472.500h2.800l1.500-2.600h5.400l1.500 2.600h2.600a1.500 1.500 0 0 1 1.500 1.500v9.200a1.500 1.500 0 0 1-1.500 1.500H395.200a1.500 1.500 0 0 1-1.500-1.500V474a1.500 1.500 0 0 1 1.500-1.500Z" fill="#9aa7b0"/>
<circle cx="402.200" cy="478.600" r="3.100" fill="#9aa7b0" stroke="#21242c" stroke-width="1.600"/>
<path d="M399.400 503.300v4M404.600 503.300v4" stroke="#e8746c" stroke-width="1.700"/>
<path d="M397.300 507.300h9.400v3.200a4.700 4.700 0 0 1-2.700 4.200v3.800h-4v-3.800a4.700 4.700 0 0 1-2.700-4.200Z" fill="#e8746c"/>
<path d="M404.500 538.500v-2.200a1.500 1.500 0 0 0-1.500-1.500h-7.500a1.500 1.500 0 0 0-1.500 1.500v13.400a1.500 1.500 0 0 0 1.500 1.500h7.500a1.500 1.500 0 0 0 1.500-1.500v-2.200" stroke="#f0506e" stroke-width="1.600"/>
<path d="M399 543h7" stroke="#f0506e" stroke-width="2.600" stroke-linecap="butt"/><path d="M405.600 538.800l4.700 4.200-4.700 4.200Z" fill="#f0506e"/>
<circle cx="397.300" cy="607" r="1.700" fill="#4fc3f7"/><circle cx="402.300" cy="607" r="1.700" fill="#4fc3f7"/><circle cx="407.300" cy="607" r="1.700" fill="#4fc3f7"/>
<path d="M438 433v-12.500M432.300 426l5.700-5.800 5.700 5.800" stroke="#7fcdbb" stroke-width="1.500"/>
<path d="M438 451v12.500M432.300 458l5.700 5.800 5.700-5.800" stroke="#7fcdbb" stroke-width="1.500"/>
<path d="M430.500 485h15M430.500 490.300h11.800a2.600 2.600 0 0 1 0 5.200h-3.300M430.500 495.600h4.500" stroke="#8f9bf5" stroke-width="1.700"/>
<path d="M440.200 493l-2.800 2.500 2.800 2.500Z" fill="#8f9bf5" stroke="#8f9bf5" stroke-width=".8"/>
<circle cx="438" cy="522.600" r="13.500" fill="#3f4f8e"/>
<path d="M434.500 516.200h7M434.500 519h7M434.500 521.800h7" stroke="#d477d6" stroke-width="1.500" stroke-linecap="butt"/>
<path d="M432.800 524.500h10.400l-5.200 5.600Z" fill="#d477d6"/>
<path d="M433.500 548h9v3.500h-9Z" fill="#3cc6d8"/>
<path d="M431.500 552.200h13a2 2 0 0 1 2 2v5.600h-3v-3.200h-11v3.200h-3v-5.600a2 2 0 0 1 2-2Z" fill="#3cc6d8"/>
<path d="M434 558.200h8v5h-8Z" stroke="#3cc6d8" stroke-width="1.500"/>
<circle cx="443.600" cy="554.800" r=".9" fill="#21242c"/>
<path d="M432.600 582.300h11.800" stroke="#fb4d6b" stroke-width="1.700"/><path d="M436.200 581.300v-.8h4.600v.8" stroke="#fb4d6b" stroke-width="1.300"/>
<path d="M433.300 584.200h10.400v9.800a1.600 1.600 0 0 1-1.600 1.600h-7.200a1.600 1.600 0 0 1-1.600-1.600Z" fill="#fb4d6b"/>
<rect x="365" y="470" width="13" height="5.800" rx="1" fill="#f5c518"/><rect x="365" y="477.200" width="13" height="5.800" rx="1" fill="#f5c518"/>
<rect x="367" y="472" width="2" height="1.800" fill="#21242c"/><rect x="367" y="479.200" width="2" height="1.800" fill="#21242c"/>
<path d="M371.500 591l2 4.300 4.700.6-3.500 3.200.9 4.700-4.100-2.300-4.100 2.300.9-4.700-3.500-3.200 4.700-.6Z" fill="#f9c80e"/>
</svg>
</div>
</body></html>
